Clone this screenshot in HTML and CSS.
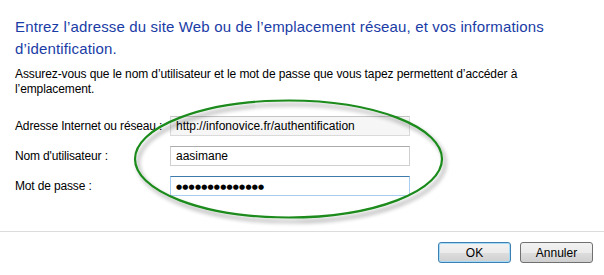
FILE: index.html
```html
<!DOCTYPE html>
<html lang="fr">
<head>
<meta charset="utf-8">
<title>Connexion</title>
<link rel="stylesheet" href="styles.css">
</head>
<body>
<div class="dialog">
  <div class="content">
    <h1 class="title">Entrez l’adresse du site Web ou de l’emplacement réseau, et vos informations d’identification.</h1>
    <p class="desc">Assurez-vous que le nom d’utilisateur et le mot de passe que vous tapez permettent d’accéder à l’emplacement.</p>
    <div class="form">
      <label class="label">Adresse Internet ou réseau :</label>
      <div class="field readonly">http://infonovice.fr/authentification</div>
      <label class="label">Nom d'utilisateur :</label>
      <div class="field">aasimane</div>
      <label class="label">Mot de passe :</label>
      <div class="field focus"><span class="dots">●●●●●●●●●●●●●●</span></div>
    </div>
    <svg class="annotation" width="604" height="231" viewBox="0 0 604 231">
      <defs>
        <filter id="shadow" x="-10%" y="-20%" width="120%" height="140%">
          <feGaussianBlur in="SourceAlpha" stdDeviation="2.2" result="b"/>
          <feOffset in="b" dx="3" dy="4" result="o"/>
          <feComponentTransfer in="o" result="s"><feFuncA type="linear" slope="0.4"/></feComponentTransfer>
          <feMerge><feMergeNode in="s"/><feMergeNode in="SourceGraphic"/></feMerge>
        </filter>
      </defs>
      <ellipse cx="288.5" cy="159" rx="153.5" ry="58.5" fill="none" stroke="#1a8a1a" stroke-width="2.2" filter="url(#shadow)"/>
    </svg>
  </div>
  <div class="footer">
    <button class="btn default">OK</button>
    <button class="btn">Annuler</button>
  </div>
</div>
</body>
</html>
```
FILE: styles.css
```css
html, body {
  margin: 0;
  padding: 0;
  background: #ffffff;
}
.dialog {
  width: 604px;
  height: 275px;
  display: flex;
  flex-direction: column;
  font-family: "Liberation Sans", Arial, sans-serif;
  color: #000;
}
.content {
  position: relative;
  height: 231px;
  padding: 16px 0 0 15px;
  box-sizing: border-box;
}
.title {
  margin: 0;
  font-weight: normal;
  font-size: 15px;
  line-height: 22px;
  letter-spacing: 0.15px;
  color: #1a3ca6;
  width: 575px;
}
.desc {
  margin: 7px 0 0 0;
  font-size: 12px;
  line-height: 15px;
  letter-spacing: -0.1px;
  width: 545px;
}
.form {
  margin: 19px 0 0 0;
  display: grid;
  grid-template-columns: 155px 240px;
  row-gap: 10px;
  align-items: center;
}
.label {
  font-size: 12px;
  letter-spacing: -0.15px;
}
.field {
  height: 20px;
  box-sizing: border-box;
  border: 1px solid #cfcfcf;
  border-top-color: #ababab;
  background: #fff;
  padding: 0 5px;
  font-size: 12px;
  line-height: 18px;
}
.field.readonly {
  background: #f6f6f6;
  border-color: #dadada;
  border-top-color: #c4c4c4;
}
.field.focus {
  border-color: #a9cdf0;
  border-top-color: #3d7bad;
}
.dots {
  font-family: "DejaVu Sans", sans-serif;
  font-size: 7px;
  letter-spacing: 0.2px;
  vertical-align: 1px;
}
.annotation {
  position: absolute;
  left: 0;
  top: 0;
  pointer-events: none;
}
.footer {
  border-top: 1px solid #dcdcdc;
  flex: 1;
  display: flex;
  justify-content: flex-end;
  align-items: flex-start;
  gap: 9px;
  padding: 10px 11px 0 0;
}
.btn {
  width: 73px;
  height: 21px;
  box-sizing: border-box;
  border: 1px solid #707070;
  border-radius: 3px;
  background: linear-gradient(#f2f2f2 0%, #ebebeb 50%, #dddddd 51%, #cfcfcf 100%);
  font-family: "Liberation Sans", Arial, sans-serif;
  font-size: 12px;
  color: #000;
  padding: 0;
}
.btn.default {
  border-color: #3c7fb1;
  box-shadow: inset 0 0 0 1px #a6dcf7;
}
```
